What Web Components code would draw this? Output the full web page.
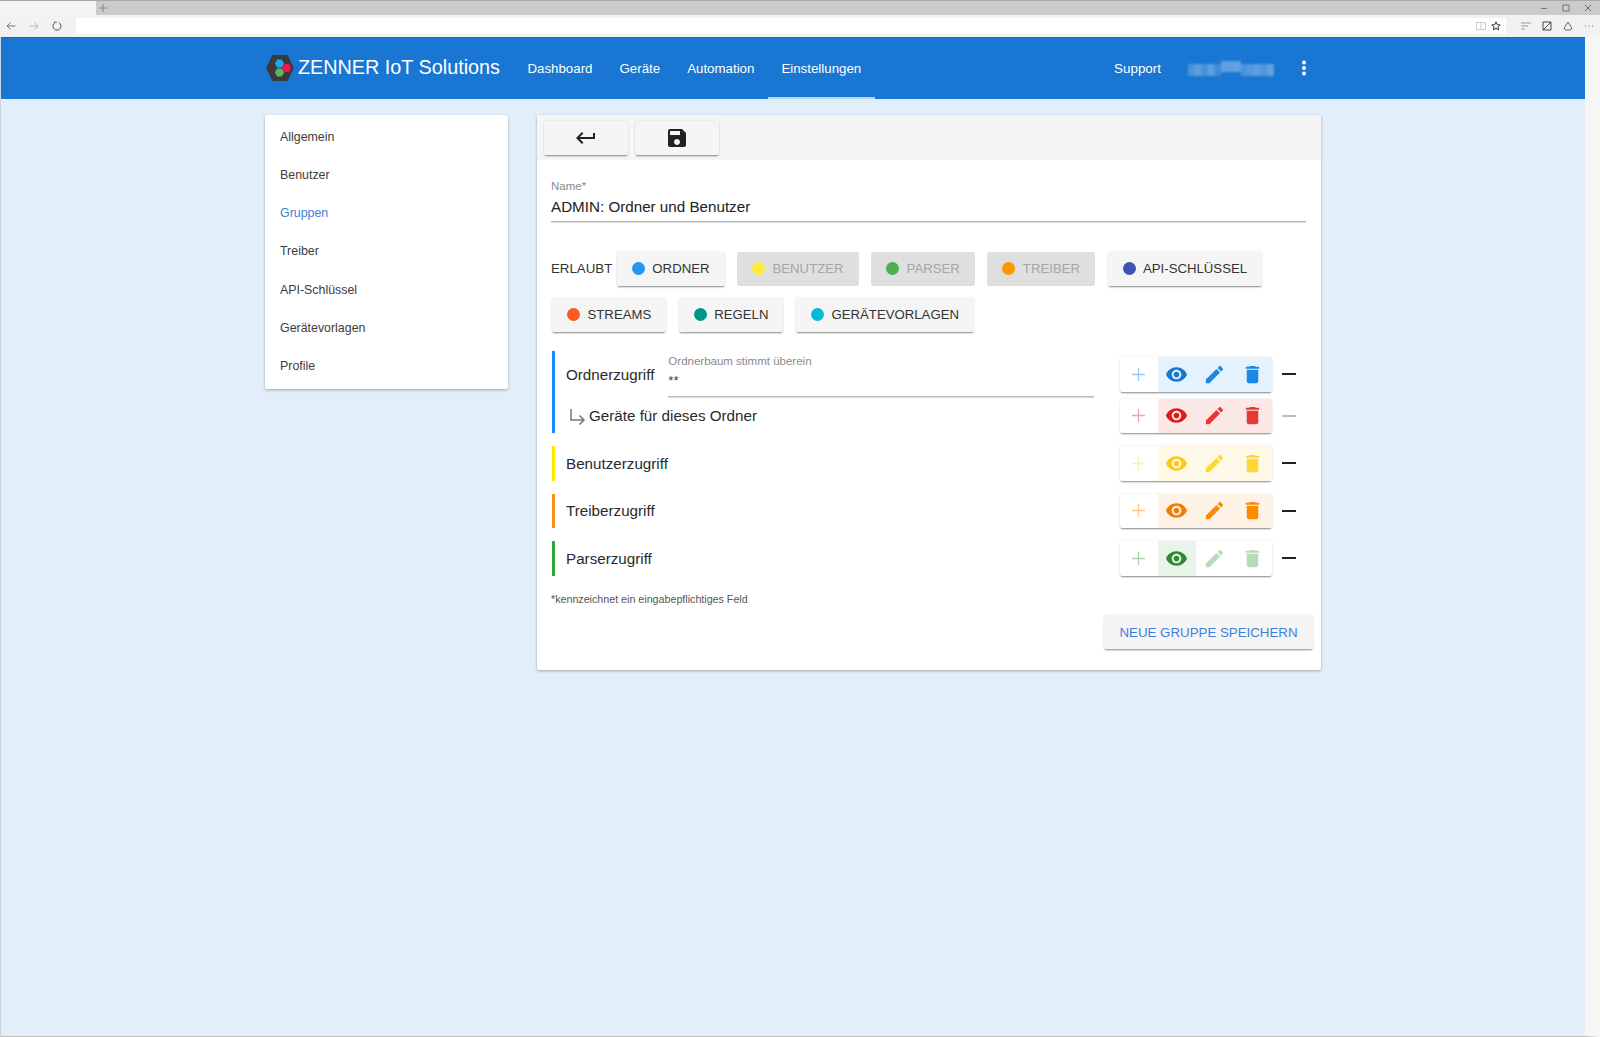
<!DOCTYPE html>
<html lang="de">
<head>
<meta charset="utf-8">
<title>ZENNER IoT Solutions</title>
<style>
  html, body { margin: 0; height: 100%; }
  body { background: #e2eefa; font-family: "Liberation Sans", Arial, sans-serif; color: #212121; overflow: hidden; }
</style>
</head>
<body>
<browser-chrome></browser-chrome>
<app-shell>
  <app-header slot="header">
    <nav-link>Dashboard</nav-link>
    <nav-link>Geräte</nav-link>
    <nav-link>Automation</nav-link>
    <nav-link active>Einstellungen</nav-link>
  </app-header>
  <side-menu slot="side">
    <side-item>Allgemein</side-item>
    <side-item>Benutzer</side-item>
    <side-item active>Gruppen</side-item>
    <side-item>Treiber</side-item>
    <side-item>API-Schlüssel</side-item>
    <side-item>Gerätevorlagen</side-item>
    <side-item>Profile</side-item>
  </side-menu>
  <group-card slot="main">
    <tool-button icon="back" slot="tools"></tool-button>
    <tool-button icon="save" slot="tools"></tool-button>

    <text-field label="Name*" value="ADMIN: Ordner und Benutzer"></text-field>

    <chip-row>
      <perm-chip color="#2196f3">ORDNER</perm-chip>
      <perm-chip color="#ffeb3b" off>BENUTZER</perm-chip>
      <perm-chip color="#4caf50" off>PARSER</perm-chip>
      <perm-chip color="#ff9800" off>TREIBER</perm-chip>
      <perm-chip color="#3f51b5">API-SCHLÜSSEL</perm-chip>
      <perm-chip color="#ff5722">STREAMS</perm-chip>
      <perm-chip color="#009688">REGELN</perm-chip>
      <perm-chip color="#00bcd4">GERÄTEVORLAGEN</perm-chip>
    </chip-row>

    <access-block first color="#1a8cff">
      <access-line name="Ordnerzugriff" color="#1e88e5" eye="#1976d2" tint="#e3f2fd" on="eye edit del">
        <text-field compact label="Ordnerbaum stimmt überein" value="**"></text-field>
      </access-line>
      <access-line sub name="Geräte für dieses Ordner" color="#e53935" eye="#d81b1b" tint="#fde8e8" on="eye edit del" faded></access-line>
    </access-block>
    <access-block color="#ffe800">
      <access-line name="Benutzerzugriff" color="#fdd835" eye="#fdc81e" tint="#fff9e8" on="eye edit del"></access-line>
    </access-block>
    <access-block color="#fb8c1e">
      <access-line name="Treiberzugriff" color="#fb8c00" eye="#f57c00" tint="#fff2e7" on="eye edit del"></access-line>
    </access-block>
    <access-block color="#2fa83a">
      <access-line name="Parserzugriff" color="#43a047" eye="#2e8b34" tint="#e8f3e9" on="eye"></access-line>
    </access-block>

    <p slot="hint">*kennzeichnet ein eingabepflichtiges Feld</p>
    <save-button slot="footer">NEUE GRUPPE SPEICHERN</save-button>
  </group-card>
</app-shell>

<script>
const ICONS = {
  eye: "M12 4.5C7 4.5 2.73 7.61 1 12c1.73 4.39 6 7.5 11 7.5s9.27-3.11 11-7.5c-1.73-4.39-6-7.5-11-7.5zM12 17c-2.76 0-5-2.24-5-5s2.24-5 5-5 5 2.24 5 5-2.24 5-5 5zm0-8c-1.66 0-3 1.34-3 3s1.34 3 3 3 3-1.34 3-3-1.34-3-3-3z",
  edit: "M3 17.25V21h3.75L17.81 9.94l-3.75-3.75L3 17.25zM20.71 7.04c.39-.39.39-1.02 0-1.41l-2.34-2.34c-.39-.39-1.02-.39-1.41 0l-1.83 1.83 3.75 3.75 1.83-1.83z",
  del: "M6 19c0 1.1.9 2 2 2h8c1.1 0 2-.9 2-2V7H6v12zM19 4h-3.5l-1-1h-5l-1 1H5v2h14V4z",
  save: "M17 3H5c-1.11 0-2 .9-2 2v14c0 1.1.89 2 2 2h14c1.1 0 2-.9 2-2V7l-4-4zm-5 16c-1.66 0-3-1.34-3-3s1.34-3 3-3 3 1.34 3 3-1.34 3-3 3zm3-10H5V5h10v4z",
  back: "M19 7v4H5.83l3.58-3.59L8 6l-6 6 6 6 1.41-1.41L5.83 13H21V7z"
};

const RAISED = "0 2px 2px -1px rgba(0,0,0,.45), 0 0 2px rgba(0,0,0,.14)";

function define(name, html, init) {
  customElements.define(name, class extends HTMLElement {
    constructor() {
      super();
      this.attachShadow({ mode: "open" }).innerHTML = html;
    }
    connectedCallback() {
      if (init) init.call(this, this.shadowRoot);
    }
  });
}

define("browser-chrome", `
  <style>
    :host { display: block; height: 37px; background: #f2f2f2; border-top: 1px solid #a8a8a8; box-sizing: border-box; }
    .tabs { height: 14px; background: #cbcbcb; display: flex; align-items: center; }
    .tab { width: 96px; height: 100%; background: #f4f4f4; }
    .plus { margin-left: 3px; width: 8px; height: 8px; color: #8a8a8a; }
    .spacer { flex: 1; }
    .win { display: flex; gap: 14px; margin-right: 8px; color: #777; align-items: center; }
    .bar { height: 22px; display: flex; align-items: center; }
    .nav { width: 76px; display: flex; gap: 13px; padding-left: 6px; box-sizing: border-box; }
    .addr { flex: 1; height: 16px; background: #fff; display: flex; justify-content: flex-end; align-items: center; gap: 5px; padding-right: 5px; }
    .tools { width: 94px; display: flex; justify-content: flex-end; gap: 11px; padding-right: 6px; box-sizing: border-box; }
    svg { display: block; fill: none; stroke: currentColor; }
  </style>
  <div class="tabs">
    <div class="tab"></div>
    <svg class="plus" viewBox="0 0 8 8"><path d="M4 0v8M0 4h8"/></svg>
    <div class="spacer"></div>
    <div class="win">
      <svg width="8" height="8" viewBox="0 0 8 8"><path d="M1 4.500h6"/></svg>
      <svg width="8" height="8" viewBox="0 0 8 8"><rect x="1" y="1" width="6" height="6"/></svg>
      <svg width="8" height="8" viewBox="0 0 8 8"><path d="M1 1l6 6M7 1L1 7"/></svg>
    </div>
  </div>
  <div class="bar">
    <div class="nav">
      <svg width="10" height="10" viewBox="0 0 10 10" style="color:#777"><path d="M9.500 5H1M4.500 1.500L1 5l3.500 3.500"/></svg>
      <svg width="10" height="10" viewBox="0 0 10 10" style="color:#bbb"><path d="M.5 5H9M5.500 1.500L9 5 5.500 8.500"/></svg>
      <svg width="10" height="10" viewBox="0 0 10 10" style="color:#555"><path d="M3 1.600a4 4 0 1 0 4 0M1.800 1.200h3"/></svg>
    </div>
    <div class="addr">
      <svg width="10" height="10" viewBox="0 0 10 10" style="color:#ccc"><path d="M.5 1.500h9v7h-9zM5 1.500v7"/></svg>
      <svg width="10" height="10" viewBox="0 0 10 10" style="color:#333"><path d="M5 .8l1.200 2.800 3 .3-2.300 2 .7 3L5 7.300 2.400 8.900l.7-3-2.300-2 3-.3z"/></svg>
    </div>
    <div class="tools">
      <svg width="10" height="10" viewBox="0 0 10 10" style="color:#999"><path d="M0 2h10M0 5h7M0 8h4"/></svg>
      <svg width="10" height="10" viewBox="0 0 10 10" style="color:#444"><path d="M1 1h8v8H1zM1 9l8-8"/></svg>
      <svg width="10" height="10" viewBox="0 0 10 10" style="color:#666"><path d="M5 1l3.600 5.500a2 2 0 0 1-1.600 2.500H3a2 2 0 0 1-1.600-2.500z"/></svg>
      <svg width="10" height="10" viewBox="0 0 10 10" style="color:#777"><path d="M1 5h1M4.500 5h1M8 5h1"/></svg>
    </div>
  </div>
`);

define("app-shell", `
  <style>
    :host { display: block; border-left: 1px solid #c9d4df; border-right: 15px solid #f6f6f6; border-bottom: 1px solid #bdbdbd; height: 1000px; box-sizing: border-box; }
    .content { display: grid; grid-template-columns: 243px 784px; column-gap: 29px; padding: 16px 0 0 264px; align-items: start; }
  </style>
  <slot name="header"></slot>
  <div class="content">
    <slot name="side"></slot>
    <slot name="main"></slot>
  </div>
`);

define("app-header", `
  <style>
    :host { display: block; height: 62px; background: #1976d2; border-top: 1px solid #0f6ad0; box-sizing: border-box; color: #fff; }
    .inner { display: flex; align-items: stretch; height: 100%; padding: 0 0 0 264px; }
    .brand { display: flex; align-items: center; gap: 3px; margin-right: 14px; font-size: 19.800px; padding-bottom: 2px; box-sizing: border-box; }
    .links { display: flex; }
    .right { margin-left: auto; display: flex; align-items: center; }
    .support { font-size: 13.400px; }
    .blur { width: 86px; height: 16px; margin-left: 27px; filter: blur(.8px); }
    .kebab { margin-left: 28px; margin-right: 279px; margin-bottom: 1px; width: 4px; height: 16px; }
    svg { display: block; }
  </style>
  <div class="inner">
    <div class="brand">
      <svg width="30" height="28" viewBox="0 0 30 28">
        <path d="M7.500 1h15L29 14l-6.500 13h-15L1 14z" fill="#3a3a3c"/>
        <path d="M12.200 5.500h4.600l2.300 4-2.300 4h-4.600l-2.300-4z" fill="#1ea7e8"/>
        <path d="M12.200 14.500h4.600l2.300 4-2.300 4h-4.600l-2.300-4z" fill="#5cb85c"/>
        <path d="M19.200 10h4.600l2.300 4-2.300 4h-4.600l-2.300-4z" fill="#f5104f"/>
      </svg>
      <span>ZENNER IoT Solutions</span>
    </div>
    <div class="links"><slot></slot></div>
    <div class="right">
      <span class="support">Support</span>
      <svg class="blur" viewBox="0 0 86 16" id="blur"></svg>
      <svg class="kebab" viewBox="0 0 4 16" fill="#fff"><circle cx="2" cy="2.500" r="2"/><circle cx="2" cy="8" r="2"/><circle cx="2" cy="13.500" r="2"/></svg>
    </div>
  </div>
`, function (root) {
  // pixelated, anonymised user name
  const alpha = [.22, .3, .2, .3, .16, .3, .3, .32, .22, .26, .3, .24, .32];
  root.getElementById("blur").innerHTML = alpha.map((a, i) => {
    const bump = i >= 5 && i <= 7;
    return `<rect x="${i * 6.600}" y="${bump ? 0 : 3}" width="6.700" height="${bump ? 11 : 12}" fill="#fff" fill-opacity="${a}"/>`;
  }).join("");
});

define("nav-link", `
  <style>
    :host { display: flex; align-items: center; padding: 0 13.500px; font-size: 13.300px; color: #fff; box-sizing: border-box; }
    :host([active]) { box-shadow: inset 0 -2px 0 #b9d3f0; }
  </style>
  <slot></slot>
`);

define("side-menu", `
  <style>
    :host { display: block; background: #fff; border-radius: 2px; padding: 3px 0 4.500px; box-shadow: 0 1px 3px rgba(0,0,0,.3); }
  </style>
  <slot></slot>
`);

define("side-item", `
  <style>
    :host { display: flex; align-items: center; height: 38.150px; padding-left: 15px; font-size: 12.400px; color: #3c3c3c; }
    :host([active]) { color: #3f7fdc; }
  </style>
  <slot></slot>
`);

define("group-card", `
  <style>
    :host { display: block; background: #fff; border-radius: 2px; box-shadow: 0 1px 3px rgba(0,0,0,.3); height: 555px; }
    .tools { height: 45px; background: #f5f5f5; display: flex; gap: 7px; padding: 6px 0 0 7px; box-sizing: border-box; }
    .body { padding: 0 15px 0 14px; }
    .hint { font-size: 10.700px; color: #555; margin-top: 17px; height: 13px; }
    ::slotted(p) { margin: 0; }
    .footer { display: flex; justify-content: flex-end; margin: 9.500px -7px 0 0; }
  </style>
  <div class="tools"><slot name="tools"></slot></div>
  <div class="body">
    <slot></slot>
    <div class="hint"><slot name="hint"></slot></div>
    <div class="footer"><slot name="footer"></slot></div>
  </div>
`);

define("tool-button", `
  <style>
    :host { display: flex; align-items: center; justify-content: center; width: 84px; height: 34px; background: #f5f5f5; border-radius: 2px; box-shadow: ${RAISED}; }
    svg { width: 24px; height: 24px; fill: #212121; }
  </style>
  <svg viewBox="0 0 24 24"><path id="p"/></svg>
`, function (root) {
  root.getElementById("p").setAttribute("d", ICONS[this.getAttribute("icon")]);
});

define("text-field", `
  <style>
    :host { display: block; margin-top: 20px; border-bottom: 1px solid #bdbdbd; box-shadow: 0 1px 0 #d8d8d8; height: 42px; box-sizing: border-box; }
    :host([compact]) { margin: 3px 0 0; flex: 1; height: 42px; }
    .label { font-size: 11.500px; color: #8a8a8a; line-height: 13px; }
    .value { font-size: 15.200px; color: #212121; line-height: 18px; margin-top: 5px; }
    :host([compact]) .value { font-size: 13px; margin-top: 4px; color: #444; }
  </style>
  <div class="label" id="l"></div>
  <div class="value" id="v"></div>
`, function (root) {
  root.getElementById("l").textContent = this.getAttribute("label");
  root.getElementById("v").textContent = this.getAttribute("value");
});

define("chip-row", `
  <style>
    :host { display: flex; flex-wrap: wrap; margin-top: 30px; align-items: flex-start; }
    .label { font-size: 13.300px; color: #333; line-height: 34px; margin-right: 3.500px; height: 34px; }
  </style>
  <span class="label">ERLAUBT</span>
  <slot></slot>
`);

define("perm-chip", `
  <style>
    :host { display: flex; align-items: center; height: 34px; padding: 0 15px 1px; margin: 0 11.500px 12px 1px; background: #f5f5f5; border-radius: 2px; box-shadow: ${RAISED}; font-size: 13.200px; color: #333; box-sizing: border-box; }
    :host([off]) { background: #dfdfdf; box-shadow: none; color: #a6a6a6; }
    i { width: 13px; height: 13px; border-radius: 50%; margin-right: 7.500px; }
  </style>
  <i id="dot"></i><slot></slot>
`, function (root) {
  root.getElementById("dot").style.background = this.getAttribute("color");
});

define("access-block", `
  <style>
    :host { display: block; margin: 0 0 13px 1px; border-left: 3px solid var(--c); padding-left: 11px; }
    :host([first]) { margin-top: 7px; padding-top: 6px; }
    .wrap { display: flex; flex-direction: column; }
  </style>
  <div class="wrap"><slot></slot></div>
`, function () {
  this.style.setProperty("--c", this.getAttribute("color"));
});

define("access-line", `
  <style>
    :host { display: flex; align-items: center; height: 34.500px; font-size: 15.200px; color: #2a2a2a; }
    :host([sub]) { margin-top: 7px; }
    .name { white-space: nowrap; margin-right: 14px; }
    .fill { flex: 1; display: flex; min-width: 0; margin-right: 26px; }
    .arrow { width: 17px; height: 17px; margin: 1px 3px 0 3px; fill: none; stroke: #777; stroke-width: 1.500; }
    .group { display: flex; width: 152px; height: 100%; border-radius: 2px; background: #fff; box-shadow: ${RAISED}; }
    .cell { width: 38px; padding-right: 1.500px; box-sizing: border-box; display: flex; align-items: center; justify-content: center; }
    .cell svg { width: 23px; height: 23px; }
    .minus { width: 14px; height: 2px; background: #222; margin: 0 10px; }
    :host([faded]) .minus { background: #bdbdbd; }
  </style>
  <svg class="arrow" id="arrow" viewBox="0 0 17 17"><path d="M2 1v11h13M10.500 7.500l4.500 4.500-4.500 4.500"/></svg>
  <span class="name" id="name"></span>
  <div class="fill"><slot></slot></div>
  <div class="group" id="group"></div>
  <div class="minus"></div>
`, function (root) {
  const color = this.getAttribute("color");
  const on = this.getAttribute("on").split(" ");
  const tint = this.getAttribute("tint");
  root.getElementById("name").textContent = this.getAttribute("name");
  if (!this.hasAttribute("sub")) root.getElementById("arrow").remove();
  root.getElementById("group").innerHTML =
    `<div class="cell"><svg viewBox="0 0 23 23" fill="none" stroke="${color}" stroke-width="1.300" opacity=".45"><path d="M11.500 5v13M5 11.500h13"/></svg></div>` +
    ["eye", "edit", "del"].map(k => {
      const active = on.includes(k);
      const fill = k === "eye" ? this.getAttribute("eye") : color;
      return `<div class="cell" style="background:${active ? tint : "transparent"}"><svg viewBox="0 0 24 24" fill="${fill}" opacity="${active ? 1 : .38}"><path d="${ICONS[k]}"/></svg></div>`;
    }).join("");
});

define("save-button", `
  <style>
    :host { display: flex; align-items: center; justify-content: center; width: 209px; height: 34px; background: #f5f5f5; border-radius: 2px; box-shadow: ${RAISED}; font-size: 13.300px; color: #3f7fdc; }
  </style>
  <slot></slot>
`);
</script>
</body>
</html>
